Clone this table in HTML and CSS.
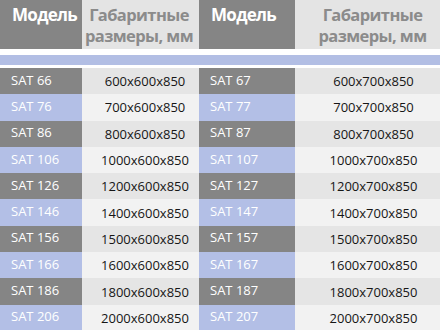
FILE: index.html
```html
<!DOCTYPE html>
<html lang="ru">
<head>
<meta charset="utf-8">
<link rel="stylesheet" href="styles.css">
</head>
<body>
<div class="table">
  <div class="head">
    <div class="hcell model">Модель</div>
    <div class="hcell size">Габаритные<br>размеры, мм</div>
    <div class="hcell model">Модель</div>
    <div class="hcell size right">Габаритные<br>размеры, мм</div>
  </div>
  <div class="band"></div>
  <div class="rows">
    <div class="m dark">SAT 66</div><div class="d l1">600x600x850</div><div class="m dark">SAT 67</div><div class="d l1 right">600x700x850</div>
    <div class="m blue">SAT 76</div><div class="d l2">700x600x850</div><div class="m blue">SAT 77</div><div class="d l2 right">700x700x850</div>
    <div class="m dark">SAT 86</div><div class="d l1">800x600x850</div><div class="m dark">SAT 87</div><div class="d l1 right">800x700x850</div>
    <div class="m blue">SAT 106</div><div class="d l2">1000x600x850</div><div class="m blue">SAT 107</div><div class="d l2 right">1000x700x850</div>
    <div class="m dark">SAT 126</div><div class="d l1">1200x600x850</div><div class="m dark">SAT 127</div><div class="d l1 right">1200x700x850</div>
    <div class="m blue">SAT 146</div><div class="d l2">1400x600x850</div><div class="m blue">SAT 147</div><div class="d l2 right">1400x700x850</div>
    <div class="m dark">SAT 156</div><div class="d l1">1500x600x850</div><div class="m dark">SAT 157</div><div class="d l1 right">1500x700x850</div>
    <div class="m blue">SAT 166</div><div class="d l2">1600x600x850</div><div class="m blue">SAT 167</div><div class="d l2 right">1600x700x850</div>
    <div class="m dark">SAT 186</div><div class="d l1">1800x600x850</div><div class="m dark">SAT 187</div><div class="d l1 right">1800x700x850</div>
    <div class="m blue">SAT 206</div><div class="d l2">2000x600x850</div><div class="m blue">SAT 207</div><div class="d l2 right">2000x700x850</div>
  </div>
</div>
</body>
</html>
```
FILE: styles.css
```css
html, body {
  margin: 0;
  padding: 0;
  background: #ffffff;
  overflow: hidden;
}
.table {
  width: 440px;
  font-family: "Open Sans", "Noto Sans", sans-serif;
}
.head {
  display: grid;
  grid-template-columns: 82px 117px 96px 145px;
  height: 49px;
}
.hcell {
  font-weight: 700;
  font-size: 16.5px;
  line-height: 21px;
  letter-spacing: -0.6px;
  padding-top: 4px;
  white-space: nowrap;
}
.hcell.model {
  background: #858585;
  color: #ffffff;
  padding-left: 12px;
  font-size: 17px;
  letter-spacing: -0.7px;
}
.hcell.size {
  background: #e4e4e4;
  color: #8b8b8b;
  text-align: center;
  padding-right: 3px;
}
.hcell.size.right {
  padding-left: 10px;
  padding-right: 0;
}
.band {
  margin-top: 6px;
  height: 10px;
  background: #b2bee4;
}
.rows {
  margin-top: 3px;
  display: grid;
  grid-template-columns: 82px 117px 96px 145px;
  grid-auto-rows: 26.3px;
  font-size: 13px;
}
.m {
  color: #ffffff;
  padding-left: 11px;
  display: flex;
  align-items: center;
  padding-bottom: 3px;
}
.dark { background: #858585; }
.blue { background: #b3bfe6; }
.d {
  color: #161616;
  display: flex;
  align-items: center;
  justify-content: center;
  padding-left: 9px;
}
.d.right { padding-left: 12px; }
.l1 { background: #e5e5e5; }
.l2 { background: #f2f2f2; }
```
